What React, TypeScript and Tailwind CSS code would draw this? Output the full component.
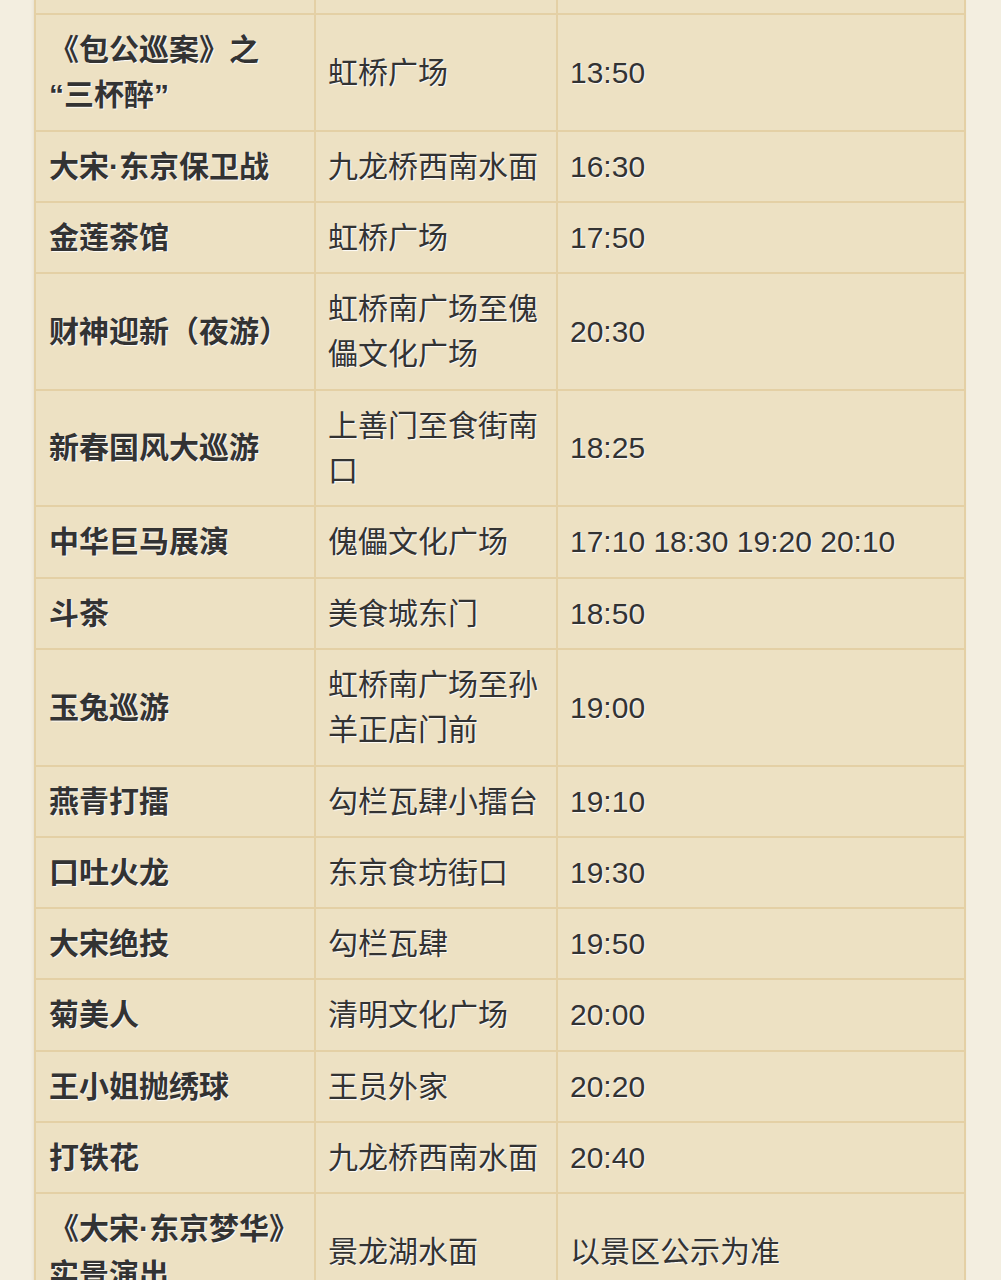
import React from "react";

type Row = { name: React.ReactNode; key: string; place: string; time: string };

const rows: Row[] = [
  {
    key: "bg",
    name: (
      <>
        《包公巡案》之
        <br />
        “三杯醉”
      </>
    ),
    place: "虹桥广场",
    time: "13:50",
  },
  { key: "bw", name: "大宋·东京保卫战", place: "九龙桥西南水面", time: "16:30" },
  { key: "jl", name: "金莲茶馆", place: "虹桥广场", time: "17:50" },
  { key: "cs", name: "财神迎新（夜游）", place: "虹桥南广场至傀儡文化广场", time: "20:30" },
  { key: "xc", name: "新春国风大巡游", place: "上善门至食街南口", time: "18:25" },
  { key: "zh", name: "中华巨马展演", place: "傀儡文化广场", time: "17:10 18:30 19:20 20:10" },
  { key: "dc", name: "斗茶", place: "美食城东门", time: "18:50" },
  { key: "yt", name: "玉兔巡游", place: "虹桥南广场至孙羊正店门前", time: "19:00" },
  { key: "yq", name: "燕青打擂", place: "勾栏瓦肆小擂台", time: "19:10" },
  { key: "kt", name: "口吐火龙", place: "东京食坊街口", time: "19:30" },
  { key: "ds", name: "大宋绝技", place: "勾栏瓦肆", time: "19:50" },
  { key: "jm", name: "菊美人", place: "清明文化广场", time: "20:00" },
  { key: "wx", name: "王小姐抛绣球", place: "王员外家", time: "20:20" },
  { key: "dt", name: "打铁花", place: "九龙桥西南水面", time: "20:40" },
  { key: "mh", name: "《大宋·东京梦华》实景演出", place: "景龙湖水面", time: "以景区公示为准" },
];

const cell =
  "border-2 border-[#E4D0A5] pr-[14px] py-[12px] align-middle leading-[45.3px] text-[30px] text-[#333] [text-shadow:1px_1px_1px_rgba(255,255,255,0.9)]";

export default function App() {
  return (
    <div
      className="h-[1280px] w-[1001px] overflow-hidden bg-[#F3EEE0]"
      style={{ fontFamily: '"Liberation Sans", "Noto Sans CJK SC", sans-serif' }}
    >
      <div className="ml-[34px] w-[930px] -mt-[2px] shadow-[0_0_3px_rgba(120,100,60,0.15)]">
        <table className="w-full table-fixed border-collapse bg-[#EDE1C3]">
          <colgroup>
            <col className="w-[280px]" />
            <col className="w-[242px]" />
            <col className="w-[408px]" />
          </colgroup>
          <tbody>
            <tr>
              <td className="h-[15px] border-2 border-[#E4D0A5] p-0"></td>
              <td className="h-[15px] border-2 border-[#E4D0A5] p-0"></td>
              <td className="h-[15px] border-2 border-[#E4D0A5] p-0"></td>
            </tr>
            {rows.map((r) => (
              <tr key={r.key}>
                <td className={`${cell} pl-[13px] font-bold`}>{r.name}</td>
                <td className={`${cell} pl-[12px]`}>{r.place}</td>
                <td className={`${cell} pl-[12px]`}>{r.time}</td>
              </tr>
            ))}
          </tbody>
        </table>
      </div>
    </div>
  );
}
